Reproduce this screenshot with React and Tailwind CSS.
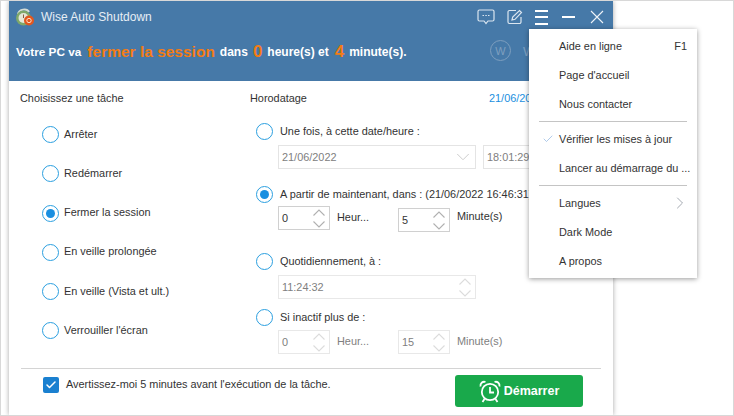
import React from "react";
import { ChevronDown, ChevronRight, Check } from "lucide-react";

const font = "font-['Liberation_Sans',sans-serif]";

const Radio = ({ checked }) => (
  <span className="flex h-[17px] w-[17px] shrink-0 items-center justify-center rounded-full border-[1.5px] border-[#2b9fe0] bg-white">
    {checked && <span className="h-[9px] w-[9px] rounded-full bg-[#1a8fe0]" />}
  </span>
);

const SpinArrows = ({ disabled }) => (
  <svg width="14" height="19" viewBox="0 0 14 19" fill="none" stroke={disabled ? "#dcdcdc" : "#b0b0b0"} strokeWidth="1.1">
    <path d="M1.500 6.500L7 1l5.500 5.500" />
    <path d="M1.500 12.500L7 18l5.500-5.500" />
  </svg>
);

const Spin = ({ value, disabled, wide }) => (
  <div
    className={`flex h-[24px] items-center justify-between border bg-white pl-[3px] pr-[3px] ${wide ? "w-[198px]" : "w-[52px]"} ${disabled ? "border-[#e8e8e8] text-[#808080]" : "border-[#d0d0d0] text-[#333]"}`}
  >
    <span>{value}</span>
    <SpinArrows disabled={disabled} />
  </div>
);

const AlarmIcon = () => (
  <svg width="22" height="23" viewBox="0 0 22 23" fill="none" stroke="white" strokeWidth="1.8">
    <circle cx="11" cy="12" r="8.200" />
    <path d="M11 7v5.500h4" />
    <path d="M1.500 6.500C1 3.500 3.500 1 6.500 2M20.500 6.500C21 3.500 18.500 1 15.500 2" />
    <path d="M5.500 19l-2 3M16.500 19l2 3" />
  </svg>
);

const AppIcon = () => (
  <svg width="20" height="20" viewBox="0 0 20 20">
    <path d="M3 7C4 2 12 1 14 5" fill="none" stroke="#d5dcd5" strokeWidth="2" />
    <circle cx="8.500" cy="11" r="7.500" fill="#7fa86a" />
    <circle cx="8.500" cy="11" r="5" fill="#e4e7d8" />
    <path d="M8.500 7.500v3.500" stroke="#8a5a40" strokeWidth="1" />
    <circle cx="14" cy="13.500" r="5" fill="#e2571e" />
    <circle cx="14" cy="13.500" r="2.200" fill="none" stroke="#fde0c8" strokeWidth="1" />
  </svg>
);

const TitleIcons = () => (
  <div className="flex items-center text-white">
    <svg width="18" height="16" viewBox="0 0 18 16" fill="none" stroke="#dbe6f0" strokeWidth="1.2" className="mr-[12px]">
      <path d="M2.500 1h13a1.500 1.500 0 0 1 1.500 1.500v8a1.500 1.500 0 0 1-1.500 1.500H11l-2 2.500L7 12H2.500A1.500 1.500 0 0 1 1 10.500v-8A1.500 1.500 0 0 1 2.500 1z" />
      <path d="M5.500 6.500h1.500M8.300 6.500h1.500M11 6.500h1.500" />
    </svg>
    <svg width="16" height="16" viewBox="0 0 16 16" fill="none" stroke="#dbe6f0" strokeWidth="1.2" className="mr-[12px]">
      <path d="M9 1.500H2.500a1.500 1.500 0 0 0-1.500 1.500v10a1.500 1.500 0 0 0 1.500 1.500h10a1.500 1.500 0 0 0 1.500-1.500V8" />
      <path d="M5 11l.7-3L12.500 1.500l2 2L8 10.300z" />
    </svg>
    <div className="mr-[14px] flex h-[15px] w-[13px] flex-col justify-between">
      <span className="h-[2px] bg-white" />
      <span className="h-[2px] bg-white" />
      <span className="h-[2px] bg-white" />
    </div>
    <span className="mr-[15px] h-[2px] w-[13px] bg-white" />
    <svg width="14" height="14" viewBox="0 0 14 14" stroke="#eef3f8" strokeWidth="1.1" className="mr-[9px]">
      <path d="M1 1l12 12M13 1L1 13" />
    </svg>
  </div>
);

const tasks = [
  { label: "Arrêter" },
  { label: "Redémarrer" },
  { label: "Fermer la session", checked: true },
  { label: "En veille prolongée" },
  { label: "En veille (Vista et ult.)" },
  { label: "Verrouiller l'écran" },
];

const MenuItem = ({ children, right, check }) => (
  <div className="relative flex h-[29px] items-center justify-between pl-[30px] pr-[10px] text-[#333]">
    {check && (
      <Check size={12} strokeWidth={1.2} className="absolute left-[13px] top-[9px] text-[#7aa8dc]" />
    )}
    <span className="whitespace-nowrap">{children}</span>
    {right}
  </div>
);

const MenuSep = () => <div className="mx-[10px] my-[2.5px] h-[1px] bg-[#c4c4c4]" />;

export default function App() {
  return (
    <div className={`${font} relative h-[416px] w-[734px] overflow-hidden border border-[#d8d8d8] bg-white pl-[8px] text-[10.9px] leading-[14px] text-[#333]`}>
      <div className="flex h-full w-[604px] flex-col bg-white shadow-[0_0_5px_rgba(0,0,0,0.35)]">
        {/* header */}
        <div className="h-[80px] shrink-0 bg-[#4679a8] text-white">
          <div className="flex h-[32px] items-center justify-between pl-[6px]">
            <div className="flex items-center gap-[6px]">
              <AppIcon />
              <span className="text-[12px] text-[#e6eef5]">Wise Auto Shutdown</span>
            </div>
            <TitleIcons />
          </div>
          <div className="relative flex items-center pl-[7px] pt-[12px] font-bold">
            <span className="text-[11.8px]">Votre PC va</span>
            <span className="ml-[6px] text-[15.500px] text-[#f37c14]">fermer la session</span>
            <span className="ml-[5px] text-[12px]">dans</span>
            <span className="ml-[5px] text-[17px] text-[#f37c14]">0</span>
            <span className="ml-[5px] text-[12px]">heure(s) et</span>
            <span className="ml-[6px] text-[17px] text-[#f37c14]">4</span>
            <span className="ml-[5px] text-[12px]">minute(s).</span>
            <span className="absolute left-[481px] top-[7px] flex h-[21px] w-[21px] items-center justify-center rounded-full border border-[#7e9fbf] text-[11px] font-normal text-[#7e9fbf]">
              W
            </span>
            <span className="absolute left-[514px] top-[12px] text-[13px] font-normal text-[#7e9fbf]">W</span>
          </div>
        </div>

        {/* body */}
        <div className="flex flex-1 flex-col px-[12px]">
          <div className="flex h-[287px] shrink-0">
            <div className="w-[229px] shrink-0 pt-[10px]">
              <div className="-ml-[1px]">Choisissez une tâche</div>
              <div className="mt-[21px] flex flex-col gap-[22.3px] pl-[21px]">
                {tasks.map((t) => (
                  <div key={t.label} className="flex h-[17px] items-center gap-[5px]">
                    <Radio checked={t.checked} />
                    <span className="pb-[2px]">{t.label}</span>
                  </div>
                ))}
              </div>
            </div>

            <div className="w-[279px] shrink-0 overflow-hidden pt-[10px]">
              <div className="flex">
                <span className="w-[239px] shrink-0">Horodatage</span>
                <span className="text-[#1a8fe0]">21/06/2022</span>
              </div>
              <div className="mt-[18px] pl-[6px]">
                <div className="flex h-[17px] items-center gap-[7px]">
                  <Radio />
                  <span className="pb-[2px]">Une fois, à cette date/heure :</span>
                </div>
                <div className="ml-[22px] mt-[5px] flex gap-[7px] text-[#808080]">
                  <div className="flex h-[24px] w-[198px] shrink-0 items-center justify-between border border-[#e4e4e4] pl-[3px] pr-[1px]">
                    <span>21/06/2022</span>
                    <ChevronDown size={22} strokeWidth={1} className="text-[#c8c8c8]" />
                  </div>
                  <div className="flex h-[24px] w-[90px] shrink-0 items-center border border-[#e4e4e4] pl-[3px]">18:01:29</div>
                </div>
                <div className="mt-[17px] flex h-[17px] items-center gap-[7px]">
                  <Radio checked />
                  <span className="whitespace-nowrap pb-[2px]">A partir de maintenant, dans : (21/06/2022 16:46:31)</span>
                </div>
                <div className="ml-[22px] mt-[3px] flex items-start">
                  <Spin value="0" />
                  <span className="ml-[7px] mt-[4px] w-[61px]">Heur...</span>
                  <div className="mt-[2px]">
                    <Spin value="5" />
                  </div>
                  <span className="ml-[7px] mt-[3px]">Minute(s)</span>
                </div>
                <div className="mt-[21px] flex h-[17px] items-center gap-[7px]">
                  <Radio />
                  <span className="pb-[2px]">Quotidiennement, à :</span>
                </div>
                <div className="ml-[22px] mt-[5px]">
                  <Spin value="11:24:32" disabled wide />
                </div>
                <div className="mt-[10px] flex h-[17px] items-center gap-[7px]">
                  <Radio />
                  <span className="pb-[2px]">Si inactif plus de :</span>
                </div>
                <div className="ml-[22px] mt-[4px] flex items-start text-[#808080]">
                  <Spin value="0" disabled />
                  <span className="ml-[7px] mt-[4px] w-[61px]">Heur...</span>
                  <Spin value="15" disabled />
                  <span className="ml-[7px] mt-[4px]">Minute(s)</span>
                </div>
              </div>
            </div>
          </div>

          {/* footer */}
          <div className="border-t border-[#d4d4d4]">
            <div className="flex items-start justify-between pr-[18px] pt-[6px]">
              <div className="flex items-center gap-[7px] pl-[22px] pt-[2px]">
                <span className="flex h-[16px] w-[16px] items-center justify-center rounded-[2px] bg-[#1a80d0] text-white">
                  <Check size={12} strokeWidth={3} />
                </span>
                <span className="pb-[2px]">Avertissez-moi 5 minutes avant l'exécution de la tâche.</span>
              </div>
              <button className="flex h-[32px] w-[128px] items-center justify-center gap-[3px] rounded-[3px] bg-[#19a94b] text-[12.500px] font-bold text-white">
                <AlarmIcon />
                Démarrer
              </button>
            </div>
          </div>
        </div>
      </div>

      {/* dropdown menu */}
      <div className="absolute left-[528px] top-[28px] h-[249px] w-[168px] bg-white py-[2px] shadow-[0_1px_5px_rgba(0,0,0,0.4)]">
        <MenuItem right={<span>F1</span>}>Aide en ligne</MenuItem>
        <MenuItem>Page d'accueil</MenuItem>
        <MenuItem>Nous contacter</MenuItem>
        <MenuSep />
        <MenuItem check>Vérifier les mises à jour</MenuItem>
        <MenuItem>Lancer au démarrage du ...</MenuItem>
        <MenuSep />
        <MenuItem right={<ChevronRight size={20} strokeWidth={1.1} className="-mr-[3px] text-[#9aa0a8]" />}>Langues</MenuItem>
        <MenuItem>Dark Mode</MenuItem>
        <MenuItem>A propos</MenuItem>
      </div>
    </div>
  );
}
